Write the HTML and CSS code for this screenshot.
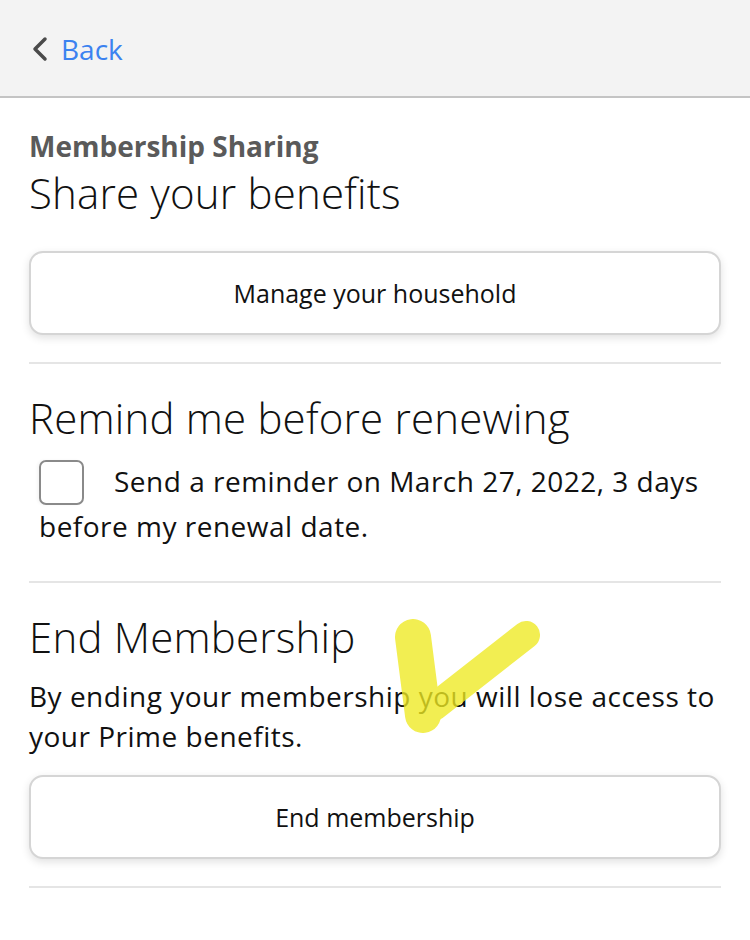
FILE: index.html
```html
<!DOCTYPE html>
<html lang="en">
<head>
    <meta charset="UTF-8">
    <meta name="viewport" content="width=device-width, initial-scale=1.0">
    <title>Prime Membership</title>
    <link rel="stylesheet" href="styles.css">
</head>
<body>
    <div class="topbar">
        <a class="back" href="#">
            <svg class="chev" width="18" height="26" viewBox="0 0 18 26"><path d="M14 3 L4 13 L14 23" fill="none" stroke="#4a4a4a" stroke-width="3.5" stroke-linecap="round" stroke-linejoin="round"/></svg>
            <span>Back</span>
        </a>
    </div>

    <div class="page">
        <section class="block">
            <div class="kicker">Membership Sharing</div>
            <h2>Share your benefits</h2>
            <button class="btn">Manage your household</button>
        </section>

        <section class="block">
            <h2>Remind me before renewing</h2>
            <label class="remind"><span class="box"></span>Send a reminder on March 27, 2022, 3 days before my renewal date.</label>
        </section>

        <section class="block">
            <h2>End Membership</h2>
            <p class="note">By ending your membership you will lose access to your Prime benefits.</p>
            <button class="btn">End membership</button>
        </section>

        <!-- highlighter tick drawn over the page -->
        <svg class="tick" width="180" height="130" viewBox="0 0 180 130">
            <path d="M33 32 L43 110" stroke="#efea22" stroke-width="36" stroke-linecap="round" fill="none"/>
            <path d="M54 102 L146 30" stroke="#efea22" stroke-width="28" stroke-linecap="round" fill="none"/>
        </svg>
    </div>
</body>
</html>
```

FILE: styles.css
```css
body {
    margin: 0;
    font-family: "Open Sans", "Noto Sans", sans-serif;
    color: #111;
    background: #fff;
}

.topbar {
    height: 96px;
    background: #f3f3f3;
    border-bottom: 2px solid #c4c4c4;
    display: flex;
    align-items: center;
    padding-left: 31px;
}

.back {
    display: flex;
    align-items: center;
    gap: 12px;
    text-decoration: none;
    color: #3b82f0;
    font-size: 28px;
    margin-top: 2px;
}

.page {
    position: relative;
    padding: 0 29px;
}

.block {
    border-bottom: 2px solid #e5e5e5;
}

.kicker {
    padding-top: 31px;
    font-size: 28px;
    font-weight: 700;
    color: #5a5a5a;
    line-height: 34px;
}

h2 {
    margin: 0;
    font-size: 42px;
    font-weight: 300;
    line-height: 60px;
    letter-spacing: 0.2px;
    color: #111;
}

.block + .block h2 {
    padding-top: 24px;
}

.btn {
    display: block;
    width: 100%;
    height: 84px;
    margin: 28px 0 27px;
    background: #fff;
    border: 2px solid #d5d5d5;
    border-radius: 14px;
    box-shadow: 0 3px 8px rgba(0, 0, 0, 0.12);
    font-family: inherit;
    font-size: 25px;
    color: #111;
}

.remind {
    display: block;
    padding: 12px 0 34px 10px;
    font-size: 28px;
    line-height: 42px;
    letter-spacing: 0.5px;
}

.box {
    display: inline-block;
    width: 41px;
    height: 41px;
    border: 2px solid #8a8a8a;
    border-radius: 7px;
    vertical-align: -13px;
    margin-right: 30px;
    box-shadow: -2px 0 3px rgba(0, 0, 0, 0.04);
}

.note {
    margin: 9px 0 0;
    font-size: 28px;
    line-height: 40px;
    letter-spacing: 0.5px;
}

.note + .btn {
    margin-top: 19px;
}

.tick {
    position: absolute;
    left: 380px;
    top: 507px;
    opacity: 0.78;
    pointer-events: none;
}
```
